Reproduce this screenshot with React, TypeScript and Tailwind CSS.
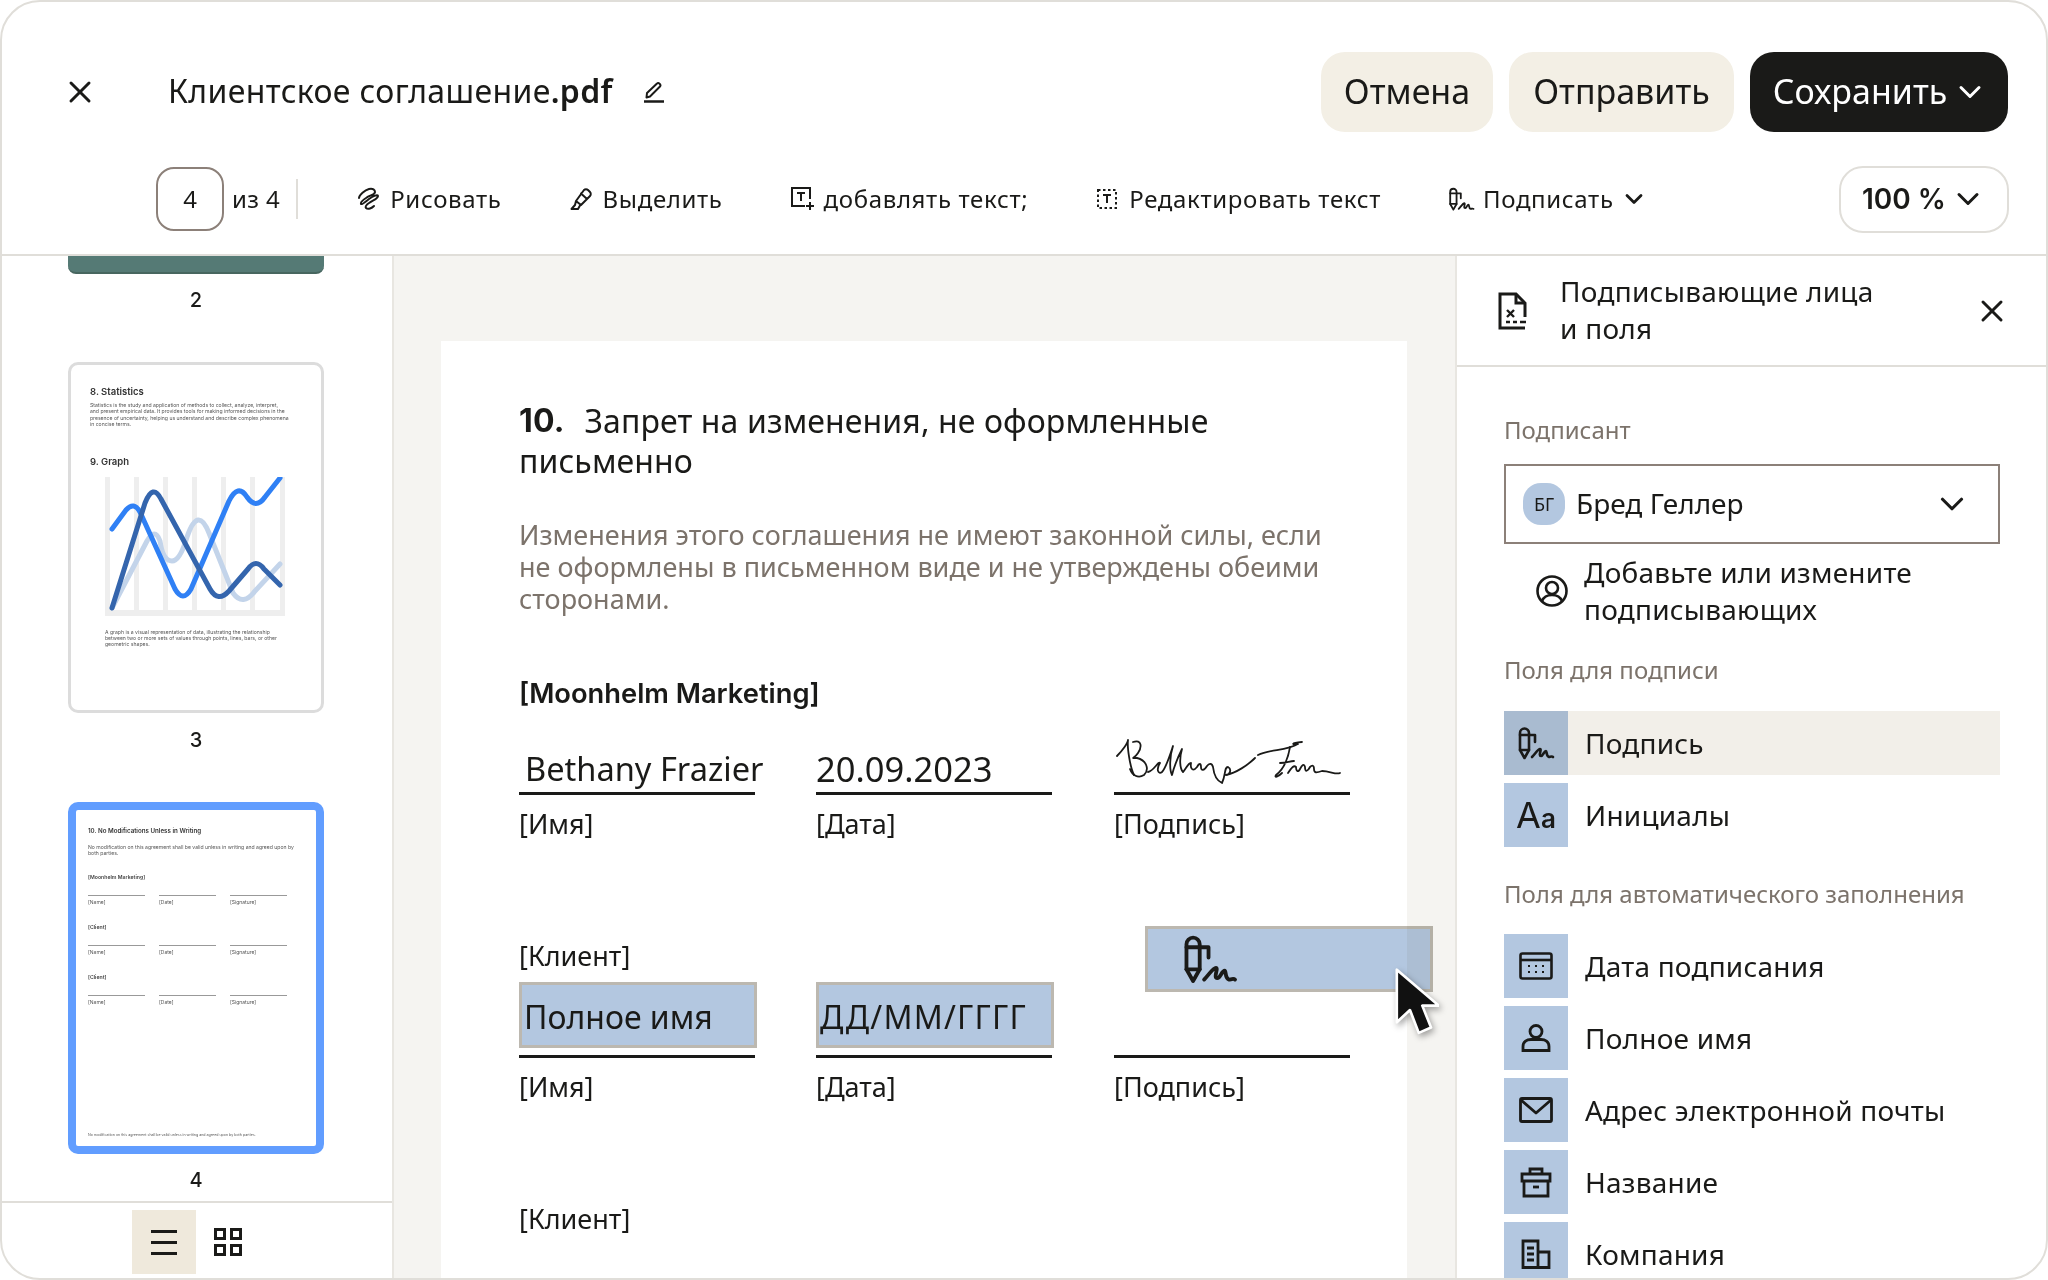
import { ChevronDown, X } from 'lucide-react';

function SignIcon({ className = '' }: { className?: string }) {
  return (
    <svg viewBox="13 14 38 34" fill="none" stroke="currentColor" strokeWidth="2.6" strokeLinecap="round" strokeLinejoin="round" className={className}>
      <path d="M16 38V21a4.5 4.5 0 0 1 9 0v17l-4.5 8z" />
      <path d="M16 23h15v7" />
      <path d="M16 38h9" />
      <path d="M28 45C31 42 34 37 36 37C38 37 34 44 37 44C39 44 40 39 42 39C43 39 42 44 45 45C46 45 48 44 49 45" />
    </svg>
  );
}

function DrawIcon() {
  return (
    <svg viewBox="0 0 24 24" fill="none" stroke="currentColor" strokeWidth="2" strokeLinecap="round" strokeLinejoin="round" className="w-[24px] h-[24px]">
      <path d="M3 11C3 8 9 3 13 2C17 1 19 3 19 5C19 8 14 8 10 11C7 13 4 15 5 17C6 18 9 15 13 12C17 9 22 7 22 9C22 12 17 13 13 16C10 18 9 20 10 21C12 23 16 21 18 19" />
    </svg>
  );
}

function HighlightIcon() {
  return (
    <svg viewBox="0 0 24 24" fill="none" stroke="currentColor" strokeWidth="2" strokeLinecap="round" strokeLinejoin="round" className="w-[24px] h-[24px]">
      <path d="M15 3C16 2 18 2 19 3L21 5C22 6 22 8 21 9L12 18L7 14zM12 6.5L18 12M7 14L6 18L2.5 22H9L11 18.500" />
    </svg>
  );
}

function AddTextIcon() {
  return (
    <svg viewBox="0 0 24 24" fill="none" stroke="currentColor" strokeWidth="2" className="w-[24px] h-[24px]">
      <path d="M15 19H2V1h18v11" />
      <path d="M7 6h8M11 6v8" />
      <path d="M20 15v8M16 19h8" />
    </svg>
  );
}

function EditTextIcon() {
  return (
    <svg viewBox="0 0 24 24" fill="none" stroke="currentColor" strokeWidth="2" className="w-[24px] h-[24px]">
      <path strokeDasharray="2.5 2.5" d="M3 3h18v18H3z" />
      <path d="M8 8h8M12 8v8" />
    </svg>
  );
}

function TitlePen() {
  return (
    <svg viewBox="0 0 20 22" fill="none" stroke="currentColor" strokeWidth="2" strokeLinejoin="round" className="w-[20px] h-[22px]">
      <path d="M3 12L13 2.500C14.500 1 17.500 3.500 16 5.500L6 15.500L2.500 16.500z" />
      <path d="M0 20.500h20" strokeWidth="2.400" />
    </svg>
  );
}

function FieldRow({ icon, label, active = false }: { icon: React.ReactNode; label: string; active?: boolean }) {
  return (
    <div className={`flex items-center h-[64px] ${active ? 'bg-[#f2efe9]' : ''}`}>
      <div className={`w-[64px] h-[64px] flex items-center justify-center ${active ? 'bg-[#a9bbd0]' : 'bg-[#b3c7e0]'}`}>{icon}</div>
      <span className="ml-[17px] text-[28px] leading-[36px] tracking-[0.22px]">{label}</span>
    </div>
  );
}

function Tool({ icon, label }: { icon: React.ReactNode; label: string }) {
  return (
    <div className="flex items-center gap-[10px]">
      {icon}
      <span className="text-[24px] tracking-[0.65px]">{label}</span>
    </div>
  );
}

function SmallColumn({ label }: { label: string }) {
  return (
    <div className="w-[57px]">
      <div className="border-b border-[#999] h-[6px]" />
      <div className="text-[5px] leading-[6px] mt-[3px] text-[#555]">{label}</div>
    </div>
  );
}

function SmallRows() {
  return (
    <div className="flex gap-[14px] mt-[10px]">
      <SmallColumn label="[Name]" />
      <SmallColumn label="[Date]" />
      <SmallColumn label="[Signature]" />
    </div>
  );
}

export default function App() {
  return (
    <div className="w-[2048px] h-[1280px] bg-white overflow-hidden font-['Noto_Sans',sans-serif] text-[#1a1a18]">
      <div className="w-full h-full rounded-[40px] border-2 border-[#e0ded9] flex flex-col overflow-hidden">
        {/* Header */}
        <div className="flex items-center h-[80px] mt-[50px] pr-[38px]">
          <X className="ml-[60px] w-[36px] h-[36px]" strokeWidth={2} />
          <div className="ml-[70px] mb-[2px] text-[32px] leading-[40px] tracking-[0.36px]">
            Клиентское соглашение<span className="font-semibold">.pdf</span>
          </div>
          <div className="ml-[31px]"><TitlePen /></div>
          <div className="ml-auto flex items-center gap-[16px]">
            <div className="h-[80px] w-[172px] rounded-[24px] bg-[#f3efe5] pb-[2px] flex items-center justify-center text-[34px]">Отмена</div>
            <div className="h-[80px] w-[225px] rounded-[24px] bg-[#f3efe5] pb-[2px] flex items-center justify-center text-[34px]">Отправить</div>
            <div className="h-[80px] w-[258px] rounded-[24px] bg-[#1a1a18] text-white pb-[2px] pl-[3px] flex items-center justify-center gap-[5px] text-[34px]">
              Сохранить
              <ChevronDown className="w-[36px] h-[36px] mt-[2px]" strokeWidth={2} />
            </div>
          </div>
        </div>

        {/* Toolbar */}
        <div className="flex items-center h-[124px] pt-[34px] pb-[22px] pl-[154px] pr-[37px] border-b-2 border-[#e0ded9] shrink-0">
          <div className="w-[68px] h-[64px] rounded-[18px] border-2 border-[#8c8079] flex items-center justify-center text-[24px]">4</div>
          <span className="ml-[8px] text-[24px] tracking-[0.4px]">из 4</span>
          <div className="ml-[16px] w-[2px] h-[40px] bg-[#e0ded9]" />
          <div className="ml-[58px] flex items-center gap-[67px]">
            <Tool icon={<DrawIcon />} label="Рисовать" />
            <Tool icon={<HighlightIcon />} label="Выделить" />
            <Tool icon={<AddTextIcon />} label="добавлять текст;" />
            <Tool icon={<EditTextIcon />} label="Редактировать текст" />
            <div className="flex items-center gap-[8px]">
              <SignIcon className="w-[27px] h-[24px]" />
              <span className="text-[24px] tracking-[0.65px]">Подписать</span>
              <ChevronDown className="w-[28px] h-[28px] -ml-[2px]" strokeWidth={2.4} />
            </div>
          </div>
          <div className="ml-auto w-[170px] h-[67px] rounded-[24px] border-2 border-[#e0ded9] flex items-center justify-center gap-[4px] font-['Inter',sans-serif] font-semibold text-[28px]">
            100 %
            <ChevronDown className="w-[36px] h-[36px]" strokeWidth={2} />
          </div>
        </div>

        <div className="flex flex-1 min-h-0">
          {/* Thumbnails */}
          <div className="w-[390px] shrink-0 flex flex-col font-['Inter',sans-serif]">
            <div className="flex-1 min-h-0 overflow-hidden flex flex-col items-center pr-[2px]">
              <div className="w-[256px] h-[18px] bg-[#557a75] border-b-2 border-[#47665f] rounded-b-[8px]" />
              <div className="text-[20px] leading-[26px] font-medium mt-[13px]">2</div>

              <div className="w-[256px] h-[351px] mt-[49px] shrink-0 rounded-[10px] border-[3px] border-[#dcdcdc] pl-[19px] pr-[12px] pt-[21px]">
                <div className="text-[9.500px] leading-[12px] font-semibold text-[#333]">8. Statistics</div>
                <div className="text-[5.100px] leading-[6.400px] text-[#555] mt-[4px] whitespace-nowrap">
                  Statistics is the study and application of methods to collect, analyze, interpret,<br />
                  and present empirical data. It provides tools for making informed decisions in the<br />
                  presence of uncertainty, helping us understand and describe complex phenomena<br />
                  in concise terms.
                </div>
                <div className="text-[9.500px] leading-[12px] font-semibold text-[#333] mt-[28px]">9. Graph</div>
                <svg viewBox="0 0 180 139" className="w-[180px] h-[139px] mt-[9px] ml-[15px]" fill="none" strokeLinecap="round" strokeLinejoin="round" strokeWidth="5">
                  <g fill="#eeeeee" stroke="none">
                    <rect x="0" y="0" width="5" height="139" />
                    <rect x="29" y="0" width="5" height="139" />
                    <rect x="58" y="0" width="5" height="139" />
                    <rect x="87" y="0" width="5" height="139" />
                    <rect x="116" y="0" width="5" height="139" />
                    <rect x="145" y="0" width="5" height="139" />
                    <rect x="175" y="0" width="5" height="139" />
                    <rect x="0" y="133" width="180" height="6" />
                  </g>
                  <path stroke="#c3d4ea" d="M7 131 L42 64 Q50 50 55 64 Q58 84 67 84 Q75 84 82 60 Q93 28 104 56 L128 116 Q138 130 150 114 L175 87" />
                  <path stroke="#2f80f5" d="M7 52 L21 33 Q29 24 35 35 L70 112 Q78 126 86 112 L124 24 Q133 6 142 20 Q151 33 160 20 L175 1" />
                  <path stroke="#3465ad" d="M7 131 L40 26 Q48 6 56 22 L105 112 Q113 126 124 114 L143 92 Q151 81 159 92 L175 108" />
                </svg>
                <div className="text-[5.100px] leading-[6.400px] text-[#555] mt-[13px] ml-[15px] whitespace-nowrap">
                  A graph is a visual representation of data, illustrating the relationship<br />
                  between two or more sets of values through points, lines, bars, or other<br />
                  geometric shapes.
                </div>
              </div>
              <div className="text-[20px] leading-[26px] font-medium mt-[14px]">3</div>

              <div className="relative w-[256px] h-[352px] mt-[49px] shrink-0 rounded-[10px] border-[8px] border-[#619dff] pl-[12px] pr-[16px] pt-[16px]">
                <div className="text-[6.200px] leading-[10px] font-semibold text-[#333]">10. No Modifications Unless in Writing</div>
                <div className="text-[5.100px] leading-[6.200px] text-[#555] mt-[8px] whitespace-nowrap">
                  No modification on this agreement shall be valid unless in writing and agreed upon by<br />
                  both parties.
                </div>
                <div className="text-[5.200px] leading-[6px] font-semibold text-[#444] mt-[17.600px]">[Moonhelm Marketing]</div>
                <SmallRows />
                <div className="text-[5.200px] leading-[6px] font-semibold text-[#444] mt-[19px]">[Client]</div>
                <SmallRows />
                <div className="text-[5.200px] leading-[6px] font-semibold text-[#444] mt-[19px]">[Client]</div>
                <SmallRows />
                <div className="absolute left-[12px] bottom-[8px] text-[3.600px] leading-[5px] text-[#555] whitespace-nowrap">
                  No modification on this agreement shall be valid unless in writing and agreed upon by both parties.
                </div>
              </div>
              <div className="text-[20px] leading-[26px] font-medium mt-[13px]">4</div>
            </div>
            <div className="h-[77px] shrink-0 border-t-2 border-[#e0ded9] flex pt-[7px] pl-[130px]">
              <div className="w-[64px] h-[64px] bg-[#efe9dc] flex items-center justify-center">
                <svg viewBox="0 0 26 25" className="w-[26px] h-[25px]" fill="#1a1a18">
                  <rect y="0" width="26" height="3" />
                  <rect y="11" width="26" height="3" />
                  <rect y="22" width="26" height="3" />
                </svg>
              </div>
              <div className="w-[64px] h-[64px] flex items-center justify-center">
                <svg viewBox="0 0 28 28" className="w-[28px] h-[28px]" fill="none" stroke="#1a1a18" strokeWidth="3">
                  <rect x="1.500" y="1.500" width="9" height="9" />
                  <rect x="17.500" y="1.500" width="9" height="9" />
                  <rect x="1.500" y="17.500" width="9" height="9" />
                  <rect x="17.500" y="17.500" width="9" height="9" />
                </svg>
              </div>
            </div>
          </div>

          {/* Document */}
          <div className="flex-1 min-w-0 bg-[#f5f4f1] border-l-2 border-r-2 border-[#e8e6e1] pl-[47px] pt-[85px] overflow-hidden">
            <div className="w-[966px] h-[1000px] bg-white pl-[78px] pt-[60px]">
              <div className="text-[32px] leading-[40px] tracking-[0.11px]">
                <div className="flex">
                  <span className="font-['Inter',sans-serif] font-bold mr-[20px]">10.</span>
                  <span>Запрет на изменения, не оформленные</span>
                </div>
                <div>письменно</div>
              </div>
              <div className="text-[27px] leading-[32px] text-[#7c736b] mt-[38px] w-[830px]">
                Изменения этого соглашения не имеют законной силы, если не оформлены в письменном виде и не утверждены обеими сторонами.
              </div>
              <div className="font-['Inter',sans-serif] font-semibold text-[27.300px] leading-[36px] mt-[61px]">[Moonhelm Marketing]</div>

              <div className="flex gap-[61px] mt-[36px]">
                <div className="w-[236px]">
                  <div className="h-[47px] border-b-[3px] border-[#1a1a18] pl-[6px] text-[32.600px] leading-[42px] whitespace-nowrap">Bethany Frazier</div>
                  <div className="text-[27px] leading-[36px] mt-[11px]">[Имя]</div>
                </div>
                <div className="w-[236px]">
                  <div className="h-[47px] border-b-[3px] border-[#1a1a18] text-[34.500px] leading-[42px]">20.09.2023</div>
                  <div className="text-[27px] leading-[36px] mt-[11px]">[Дата]</div>
                </div>
                <div className="w-[236px] ml-[1px]">
                  <div className="relative h-[47px] border-b-[3px] border-[#1a1a18]">
                    <svg viewBox="0 0 260 75" className="absolute -left-[14px] -top-[23px] w-[260px] h-[75px]" fill="none" stroke="#1a1a18" strokeWidth="1.800" strokeLinecap="round" strokeLinejoin="round">
                      <path d="M17 31C22 26 28 18 28 15C27 22 30 42 34 50" />
                      <path d="M33 17C42 14 42 22 38 28C34 34 30 33 37 33C46 35 50 44 44 50C38 54 32 50 30 44" />
                      <path d="M48 47C54 46 58 36 60 38C56 44 58 50 62 47C66 43 70 30 73 21C70 30 69 44 72 50C74 42 78 32 82 24C79 34 80 44 83 47C86 44 88 38 91 38C90 44 93 47 97 42C99 38 101 38 101 42C101 46 104 46 107 41C109 38 112 38 113 42C114 50 117 56 122 58C126 50 124 42 128 42C132 44 130 50 126 50C136 48 148 40 155 33" />
                      <path d="M158 30C170 24 186 26 198 19C192 20 190 18 202 17" />
                      <path d="M190 22C188 34 184 44 176 50C174 53 178 52 182 48M180 38C186 38 190 36 194 36" />
                      <path d="M188 48C192 42 194 40 196 42C196 46 198 48 200 44C202 40 204 38 205 42C205 48 208 46 210 42C212 40 214 40 214 44C214 48 216 48 222 46C230 46 236 50 240 48" />
                    </svg>
                  </div>
                  <div className="text-[27px] leading-[36px] mt-[11px]">[Подпись]</div>
                </div>
              </div>

              <div className="text-[27px] leading-[36px] mt-[96px]">[Клиент]</div>
              <div className="flex gap-[59px] mt-[8px]">
                <div className="w-[238px]">
                  <div className="h-[66px] bg-[#b3c7e0] border-[3px] border-[#bcb8b0] pl-[2px] pt-[3px] flex items-center text-[32px]">Полное имя</div>
                  <div className="w-[236px] h-[3px] bg-[#1a1a18] mt-[7px]" />
                  <div className="text-[27px] leading-[36px] mt-[11px]">[Имя]</div>
                </div>
                <div className="w-[238px]">
                  <div className="h-[66px] bg-[#b3c7e0] border-[3px] border-[#bcb8b0] pl-[1px] pt-[3px] flex items-center text-[32px] tracking-[1.200px] whitespace-nowrap">ДД/ММ/ГГГГ</div>
                  <div className="w-[236px] h-[3px] bg-[#1a1a18] mt-[7px]" />
                  <div className="text-[27px] leading-[36px] mt-[11px]">[Дата]</div>
                </div>
                <div className="relative w-[236px] ml-[1px]">
                  <div className="h-[66px]" />
                  <div className="h-[3px] bg-[#1a1a18] mt-[7px]" />
                  <div className="text-[27px] leading-[36px] mt-[11px]">[Подпись]</div>
                  <div className="absolute left-[31px] -top-[56px] w-[288px] h-[66px] bg-[#b3c7e0] border-[3px] border-[#bcb8b0] mix-blend-multiply flex items-center pl-[34px]">
                    <SignIcon className="w-[56px] h-[50px]" />
                  </div>
                  <svg viewBox="0 0 50 82" className="absolute left-[281px] -top-[15px] w-[44px] h-[72px] drop-shadow-[2px_3px_3px_rgba(0,0,0,0.35)]">
                    <path d="M2 3v60l15-14 10 26 14-6-10-25h19z" fill="#111" stroke="#fff" strokeWidth="3" strokeLinejoin="round" />
                  </svg>
                </div>
              </div>
              <div className="text-[27px] leading-[36px] mt-[96px]">[Клиент]</div>
            </div>
          </div>

          {/* Right panel */}
          <div className="w-[589px] shrink-0 overflow-hidden">
            <div className="h-[111px] border-b-2 border-[#e0ded9] flex items-center pl-[41px]">
              <svg viewBox="0 0 30 38" className="w-[30px] h-[38px] shrink-0" fill="none" stroke="#1a1a18" strokeWidth="3">
                <path d="M27 36H2V2h16l9 9v14" />
                <path d="M18 2v9h9" />
                <path d="M9 18l7 7M16 18l-7 7" strokeWidth="2.400" />
                <path d="M8 30h4M15 30h4M22 30h6" strokeWidth="2.400" />
              </svg>
              <div className="ml-[32px] mb-[2px] text-[28px] leading-[37px] tracking-[0.27px] w-[360px]">Подписывающие лица<br />и поля</div>
              <X className="ml-[54px] w-[36px] h-[36px]" strokeWidth={2} />
            </div>
            <div className="pl-[47px] pr-[46px] pt-[47px]">
              <div className="text-[24px] leading-[32px] text-[#7c736b]">Подписант</div>
              <div className="h-[80px] mt-[18px] border-2 border-[#8c8079] flex items-center pl-[17px] pr-[27px]">
                <div className="w-[42px] h-[42px] rounded-[18px] bg-[#b3c7e0] flex items-center justify-center text-[18px]">БГ</div>
                <span className="ml-[11px] mb-[2px] text-[28px]">Бред Геллер</span>
                <ChevronDown className="ml-auto w-[38px] h-[38px]" strokeWidth={2} />
              </div>
              <div className="flex items-center mt-[10px]">
                <svg viewBox="0 0 32 32" className="ml-[32px] w-[32px] h-[32px] shrink-0" fill="none" stroke="#1a1a18" strokeWidth="2.600">
                  <circle cx="16" cy="16" r="14.500" />
                  <circle cx="16" cy="13" r="6" />
                  <path d="M6 26c2-5 6-6 10-6s8 1 10 6" />
                </svg>
                <div className="ml-[16px] text-[28px] leading-[37px] tracking-[0.22px]">Добавьте или измените<br />подписывающих</div>
              </div>
              <div className="text-[24px] leading-[32px] text-[#7c736b] mt-[26px]">Поля для подписи</div>
              <div className="flex flex-col gap-[8px] mt-[25px]">
                <FieldRow active label="Подпись" icon={<SignIcon className="w-[38px] h-[34px]" />} />
                <FieldRow label="Инициалы" icon={<span className="font-['Inter',sans-serif] text-[36px] leading-none">A<span className="text-[26px] font-semibold">a</span></span>} />
              </div>
              <div className="text-[24px] leading-[32px] text-[#7c736b] mt-[31px]">Поля для автоматического заполнения</div>
              <div className="flex flex-col gap-[8px] mt-[24px]">
                <FieldRow label="Дата подписания" icon={
                  <svg viewBox="0 0 34 28" className="w-[34px] h-[28px]" fill="none" stroke="#1a1a18" strokeWidth="2.600">
                    <rect x="1.500" y="1.500" width="31" height="25" rx="2" />
                    <path d="M1.500 8h31" />
                    <path d="M9 14h2M16 14h2M23 14h2M9 20h2M16 20h2M23 20h2" strokeWidth="2" />
                  </svg>
                } />
                <FieldRow label="Полное имя" icon={
                  <svg viewBox="0 0 30 28" className="w-[30px] h-[28px]" fill="none" stroke="#1a1a18" strokeWidth="2.800">
                    <circle cx="15" cy="7.500" r="6" />
                    <path d="M2 26.500v-4c0-5 4-7 8-7h10c4 0 8 2 8 7v4z" />
                  </svg>
                } />
                <FieldRow label="Адрес электронной почты" icon={
                  <svg viewBox="0 0 34 26" className="w-[34px] h-[26px]" fill="none" stroke="#1a1a18" strokeWidth="2.800" strokeLinejoin="round">
                    <rect x="1.500" y="1.500" width="31" height="23" rx="1.500" />
                    <path d="M2 3l15 13L32 3" />
                  </svg>
                } />
                <FieldRow label="Название" icon={
                  <svg viewBox="0 0 32 32" className="w-[32px] h-[32px]" fill="none" stroke="#1a1a18" strokeWidth="2.800">
                    <path d="M2 8h28v7H2zM4 15v15h24V15M10 8V3h12v5" />
                    <path d="M13 21h6" />
                  </svg>
                } />
                <FieldRow label="Компания" icon={
                  <svg viewBox="0 0 30 30" className="w-[30px] h-[30px]" fill="none" stroke="#1a1a18" strokeWidth="2.800">
                    <path d="M2 28.500V2h15v26.500zM17 13h11v15.500H17z" />
                    <path d="M6 9h7M6 15h7M6 21h7" />
                  </svg>
                } />
              </div>
            </div>
          </div>
        </div>
      </div>
    </div>
  );
}
